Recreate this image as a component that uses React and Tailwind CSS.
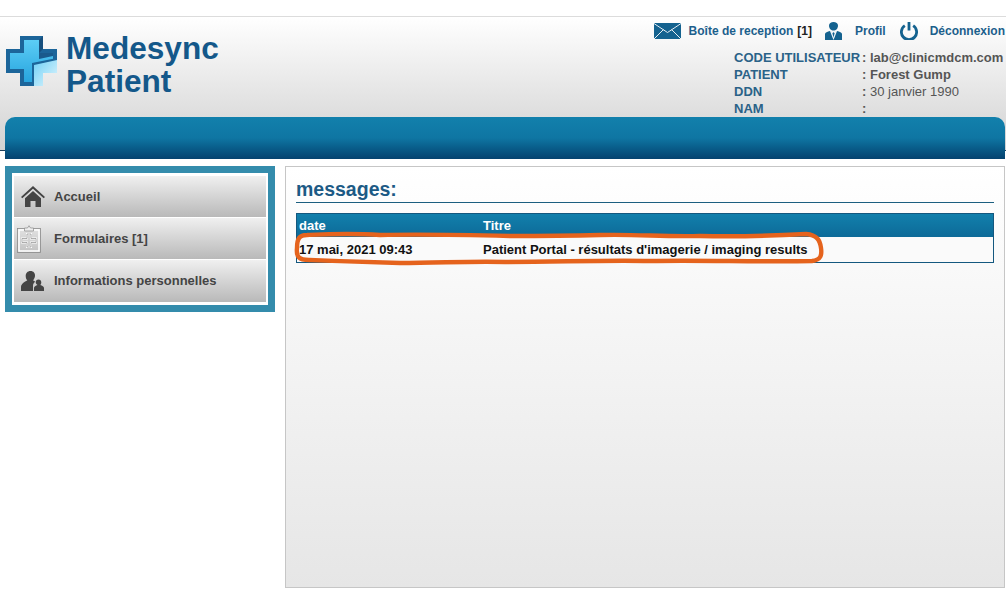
import React from "react";

const menuItems = [
    { label: "Accueil", icon: "home" },
    { label: "Formulaires [1]", icon: "form" },
    { label: "Informations personnelles", icon: "people" },
];

const userInfo = [
    { label: "CODE UTILISATEUR", value: "lab@clinicmdcm.com", strong: true },
    { label: "PATIENT", value: "Forest Gump", strong: true },
    { label: "DDN", value: "30 janvier 1990" },
    { label: "NAM", value: "" },
];

function CrossLogo() {
    return (
        <svg width="51" height="50" viewBox="0 0 51 50" className="shrink-0">
            <defs>
                <linearGradient id="crossFill" x1="0" y1="0" x2="0" y2="1">
                    <stop offset="0" stopColor="#5ccdf6" />
                    <stop offset="1" stopColor="#27a4de" />
                </linearGradient>
                <linearGradient id="crossPanel" x1="0" y1="0" x2="1" y2="1">
                    <stop offset="0" stopColor="#6fd0f6" />
                    <stop offset="1" stopColor="#e3f6fd" />
                </linearGradient>
            </defs>
            <path d="M14 0H37V13H51V37H37V50H14V37H0V13H14Z" fill="#1c659a" />
            <path d="M18 4H33V17H47V33H33V46H18V33H4V17H18Z" fill="url(#crossFill)" />
            <path d="M33 17H47V20L33 23Z" fill="#1a5a8c" />
            <path d="M33 4V17L37 13V0Z" fill="#174f7d" />
            <path d="M26 27L51 22V37H37V50H26Z" fill="#1c659a" />
            <path d="M28 29L51 24V37H37V50H28Z" fill="url(#crossPanel)" />
        </svg>
    );
}

function MailIcon() {
    return (
        <svg width="27" height="16" viewBox="0 0 27 16">
            <rect width="27" height="16" fill="#14628f" />
            <path d="M0 0.500l13.500 9 13.500-9M0 16l9.500-9.500M27 16l-9.500-9.500" fill="none" stroke="#e6eef3" strokeWidth="1" />
        </svg>
    );
}

function ProfileIcon() {
    return (
        <svg width="17" height="18" viewBox="0 0 17 18">
            <path d="M4 3.500C4 1.500 6 0 8.500 0S13 1.500 13 3.500C13 6.500 11 8.500 8.500 8.500S4 6.500 4 3.500Z" fill="#14628f" />
            <path d="M0 18V12c0-1.500 2.500-2.500 5-3l3.500 9 3.500-9c2.500.5 5 1.500 5 3v6z" fill="#14628f" />
            <path d="M6 9.500h5L8.500 17Z" fill="#e6eef3" />
            <path d="M8.500 10l1 1.500-1 4-1-4z" fill="#14628f" />
        </svg>
    );
}

function PowerIcon() {
    return (
        <svg width="18" height="18" viewBox="0 0 18 18">
            <path d="M4.800 3.700a7.600 7.600 0 1 0 8.400 0" fill="none" stroke="#14628f" strokeWidth="2.800" />
            <path d="M9 0v8.500" stroke="#14628f" strokeWidth="2.800" />
        </svg>
    );
}

function MenuIcon({ name }) {
    if (name === "home") {
        return (
            <svg width="24" height="21" viewBox="0 0 24 21" className="ml-[7px]">
                <path d="M12 0L0 11l1.300 1.300L12 2.700l10.700 9.600L24 11z" fill="#444" />
                <path d="M4 12.300L12 5l8 7.300V21h-5.500v-6h-5v6H4z" fill="#444" />
            </svg>
        );
    }
    if (name === "form") {
        return (
            <svg width="24" height="28" viewBox="0 0 24 28" className="ml-[3px]">
                <rect x="0.500" y="3.500" width="23" height="24" fill="none" stroke="#8a8a8a" strokeWidth="0.800" />
                <rect x="2" y="5" width="20" height="21" fill="none" stroke="#fff" strokeWidth="1.500" />
                <path d="M7.500 6V3H10.500L12 0.700L13.500 3H16.500V6Z" fill="#ededed" stroke="#8a8a8a" strokeWidth="0.700" />
                <path d="M10 9h4v4.500h5v4h-5V22h-4v-4.500H5v-4h5z" fill="none" stroke="#fff" strokeWidth="1.800" />
                <path d="M10 9h4v4.500h5v4h-5V22h-4v-4.500H5v-4h5z" fill="none" stroke="#777" strokeWidth="0.600" />
            </svg>
        );
    }
    return (
        <svg width="23" height="20" viewBox="0 0 23 20" className="ml-[7px]">
            <path d="M9.500 0c3 0 4.800 2.200 4.500 5-.2 1.700-.9 3.200-2 4.300.8.500 1.600 1 2.200 1.500-1.300 1-2.200 2.300-2.200 4V20H0v-4c0-3 3.500-5 6.300-6.700C5.200 8.200 4.700 6.800 4.700 5 4.700 2.200 6.500 0 9.500 0z" fill="#444" />
            <path d="M17.500 8.500c1.700 0 2.800 1.300 2.800 3 0 1-.4 1.900-1 2.500 1.800.7 3.700 1.600 3.700 3v3H13v-3c0-1.400 1.700-2.300 3.500-3-.6-.6-1.800-1.500-1.800-2.500 0-1.700 1.100-3 2.800-3z" fill="#444" />
        </svg>
    );
}

export default function App() {
    return (
        <div className="relative w-[1006px] h-[592px] overflow-hidden bg-white font-['Liberation_Sans',Arial,sans-serif]">
            <div className="h-4" />

            {/* header */}
            <div className="h-[135px] border-t border-t-[#dcdcdc] border-b border-b-[#1d3f5c] bg-gradient-to-b from-white to-[#d2d2d2] flex justify-between">
                <div className="flex items-start pl-[6px] pt-[19px]">
                    <CrossLogo />
                    <h1 className="ml-[9px] -mt-[4px] text-[31.6px] leading-[33px] font-bold text-[#14588a]">
                        Medesync
                        <br />
                        Patient
                    </h1>
                </div>

                <div className="flex flex-col items-end pt-[4px] pr-[1px]">
                    <div className="flex items-center h-[19px] text-[12px] text-[#1c5f8c] font-bold">
                        <MailIcon />
                        <span className="ml-2">Boîte de reception</span>
                        <span className="ml-1 text-[#222]">[1]</span>
                        <span className="ml-[13px]"><ProfileIcon /></span>
                        <span className="ml-[13px]">Profil</span>
                        <span className="ml-[14px]"><PowerIcon /></span>
                        <span className="ml-[12px]">Déconnexion</span>
                    </div>
                    <div className="mt-[9px] w-[271px] text-[13px] leading-[17px]">
                        {userInfo.map((row) => (
                            <div key={row.label} className="flex">
                                <span className="w-[128px] shrink-0 font-bold text-[#2a6288] whitespace-nowrap">{row.label}</span>
                                <span className="font-bold text-[#555] whitespace-nowrap">
                                    :{" "}
                                    <span className={row.strong ? "font-bold" : "font-normal"}>{row.value}</span>
                                </span>
                            </div>
                        ))}
                    </div>
                </div>
            </div>

            {/* blue bar hangs over the header line */}
            <div className="relative ml-[5px] mr-[1px] -mt-[34px] h-[42px] rounded-t-[10px] bg-gradient-to-b from-[#1280ac] via-[#0f76a3] to-[#05426f]" />

            <div className="flex items-start gap-[10px] pl-[5px] pr-[1px] pt-[7px]">
                {/* side menu */}
                <div className="w-[270px] shrink-0 border-[7px] border-[#348cac] bg-white pt-[3px] pb-[3px] pl-[2px] pr-[2px]">
                    {menuItems.map((item) => (
                        <div key={item.label} className="h-[42px] flex items-center bg-gradient-to-b from-[#f0f0f0] to-[#b9b9b9] border-b border-b-white last:border-b-0">
                            <div className="w-[40px] shrink-0">
                                <MenuIcon name={item.icon} />
                            </div>
                            <span className="text-[13px] font-bold text-[#444]">{item.label}</span>
                        </div>
                    ))}
                </div>

                {/* content */}
                <div className="w-[720px] h-[422px] border border-[#c6c6c6] bg-gradient-to-b from-white to-[#e6e6e6] px-[10px] pt-[10px]">
                    <h2 className="h-[26px] border-b border-b-[#1c5f80] text-[19.5px] leading-[24px] font-bold text-[#1c5a85]">messages:</h2>
                    <div className="mt-[10px] border border-[#14587f]">
                        <div className="h-[23px] flex items-end pb-[4px] bg-gradient-to-b from-[#1280ac] to-[#0d6a98] text-[13px] leading-[14px] font-bold text-white">
                            <span className="w-[186px] pl-[2px]">date</span>
                            <span>Titre</span>
                        </div>
                        <div className="h-[25px] flex items-center bg-[#fafafa] text-[13px] font-bold text-[#111]">
                            <span className="w-[186px] pl-[2px]">17 mai, 2021 09:43</span>
                            <span>Patient Portal - résultats d'imagerie / imaging results</span>
                        </div>
                    </div>
                </div>
            </div>

            {/* hand-drawn highlight */}
            <svg width="1006" height="592" viewBox="0 0 1006 592" className="absolute left-0 top-0 pointer-events-none">
                <path
                    d="M307 235C299 235 297 239 297 248C296 257 299 260 309 260C340 261 362 262 400 263C440 263 470 261 505 262C560 262 600 260 650 261C700 260 760 262 812 261C821 260 822 255 821 248C820 240 817 235 806 234C770 236 745 237 700 236C660 237 640 234 600 235C560 236 540 236 510 236C470 235 420 234 380 235C350 233 330 234 307 235Z"
                    fill="none"
                    stroke="#e5631d"
                    strokeWidth="4.400"
                    strokeLinejoin="round"
                />
            </svg>
        </div>
    );
}
